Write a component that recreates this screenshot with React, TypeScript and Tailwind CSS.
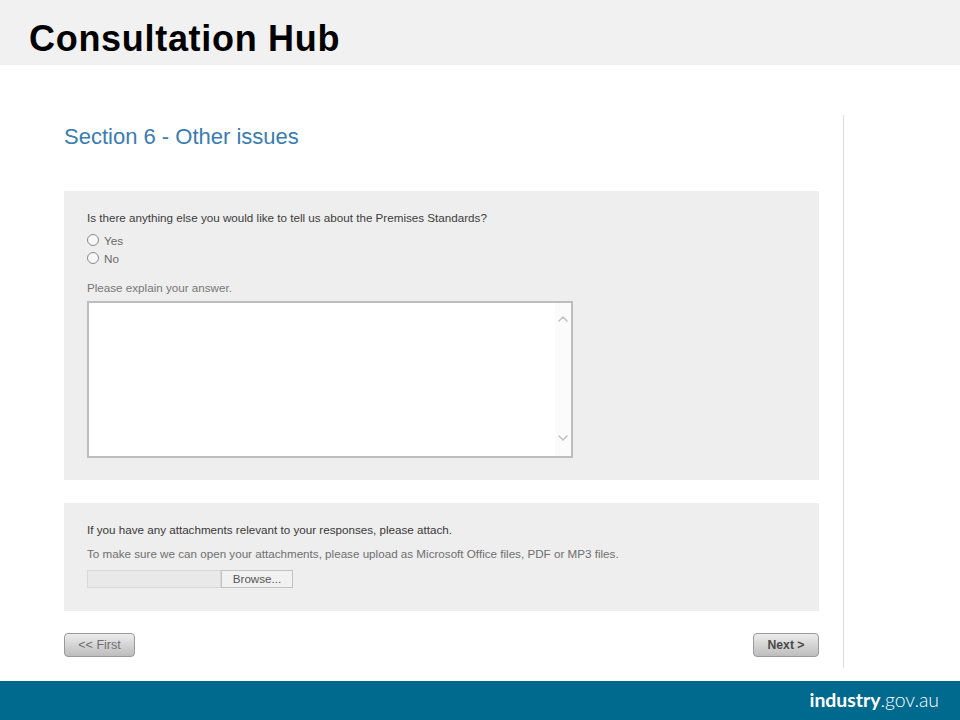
import React from "react";
import { ChevronDown, ChevronUp } from "lucide-react";

const sans = "font-['Liberation_Sans',Arial,sans-serif]";

const Radio = ({ label }: { label: string }) => (
  <label className="flex items-center h-[18px] text-[11.7px] text-[#6a6a6a]">
    <span className="w-[12px] h-[12px] rounded-full border border-[#8a8a8a] bg-[#f7f7f7] mr-[5px] -mt-[2px]"></span>
    <span>{label}</span>
  </label>
);

const NavButton = ({ text, bold }: { text: string; bold?: boolean }) => (
  <button
    type="button"
    className={
      bold
        ? "w-[66px] h-[24px] rounded-[4px] border border-[#9a9a9a] bg-gradient-to-b from-[#ececec] to-[#bdbdbd] text-[12.2px] font-bold text-[#4a4a4a]"
        : "w-[71px] h-[24px] rounded-[4px] border border-[#9a9a9a] bg-gradient-to-b from-[#ececec] to-[#bdbdbd] text-[12.5px] text-[#6f6f6f]"
    }
  >
    {text}
  </button>
);

const App = () => {
  return (
    <div className={`w-[960px] h-[720px] flex flex-col bg-white overflow-hidden ${sans}`}>
      <header className="h-[65px] shrink-0 bg-[#f1f1f1] flex items-center pl-[29px]">
        <h1 className="text-[36px] leading-none font-bold text-black tracking-[0.7px] mt-[10px] mb-[-2px]">
          Consultation Hub
        </h1>
      </header>

      <main className="flex-1 flex pl-[64px] pt-[50px] pb-[13px]">
        <div className="w-[755px] flex flex-col">
          <h2 className="text-[22px] leading-[44px] h-[44px] text-[#3a7cb0] mb-[32px]">
            Section 6 - Other issues
          </h2>

          <section className="h-[289px] bg-[#eeeeee] pl-[23px] pt-[20px] flex flex-col">
            <p className="text-[11.65px] leading-[14px] text-[#3c3c3c]">
              Is there anything else you would like to tell us about the Premises Standards?
            </p>
            <div className="mt-[7px] flex flex-col">
              <Radio label="Yes" />
              <Radio label="No" />
            </div>
            <p className="mt-[13px] text-[11.65px] leading-[14px] text-[#777777]">
              Please explain your answer.
            </p>
            <div className="mt-[6px] w-[486px] h-[157px] border-2 border-[#bdbdbd] bg-white flex justify-end">
              <div className="w-[16px] bg-[#fbfbfb] flex flex-col justify-between items-center pt-[8px] pb-[10px]">
                <ChevronUp className="w-[16px] h-[16px] text-[#c4c4c4]" strokeWidth={2.5} />
                <ChevronDown className="w-[16px] h-[16px] text-[#c4c4c4]" strokeWidth={2.5} />
              </div>
            </div>
          </section>

          <section className="h-[108px] mt-[23px] bg-[#eeeeee] pl-[23px] pt-[20px] flex flex-col">
            <p className="text-[11.65px] leading-[14px] text-[#383838]">
              If you have any attachments relevant to your responses, please attach.
            </p>
            <p className="mt-[10px] text-[11.65px] leading-[14px] text-[#6f6f6f]">
              To make sure we can open your attachments, please upload as Microsoft Office files, PDF or MP3 files.
            </p>
            <div className="mt-[9px] flex h-[18px] w-[206px]">
              <div className="w-[134px] border border-[#d8d8d8] bg-[#e9e9e9]"></div>
              <button
                type="button"
                className="w-[72px] border border-[#c2c2c2] bg-[#f1f1f1] text-[11.65px] leading-none text-[#555555]"
              >
                Browse...
              </button>
            </div>
          </section>

          <div className="mt-[22px] flex justify-between">
            <NavButton text="<< First" />
            <NavButton text="Next >" bold />
          </div>
        </div>
        <div className="ml-[24px] w-px bg-[#dcdcdc]"></div>
      </main>

      <footer className="h-[39px] shrink-0 bg-[#006a8e] flex items-center justify-end pr-[21px] pb-[2px] text-white text-[19.4px] font-['Lato',sans-serif]">
        <span className="font-bold">industry</span>
        <span className="font-light">.gov.au</span>
      </footer>
    </div>
  );
};

export default App;
